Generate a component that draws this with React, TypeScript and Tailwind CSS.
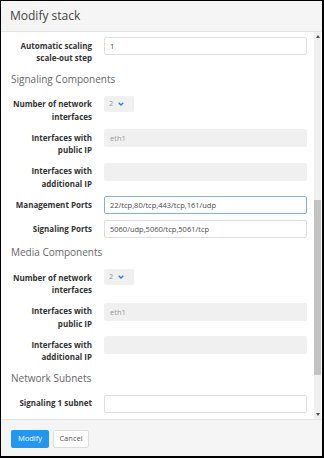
import { ReactNode } from 'react';

// Label column on the left, control on the right, like a horizontal bootstrap form
function Field({ lines, children }: { lines: string[]; children: ReactNode }) {
  return (
    <div className="flex items-start mb-[6px]">
      <div className="w-[81px] shrink-0 pt-[2.5px] text-right text-[8px] leading-[12.5px] font-bold text-[#333]">
        {lines.map((l, i) => (
          <div key={i}>{l}</div>
        ))}
      </div>
      <div className="ml-[12px] w-[203px] shrink-0">{children}</div>
    </div>
  );
}

function TextInput({ value = '', disabled = false, focused = false }: { value?: string; disabled?: boolean; focused?: boolean }) {
  let cls = 'border-[#dedede] bg-white text-[#4a4a4a]';
  if (disabled) cls = 'border-[#f0f0f0] bg-[#f0f0f0] text-[#999]';
  if (focused) cls = 'border-[#7fb0ee] bg-white text-[#4a4a4a]';
  return (
    <div className={`h-[18px] rounded-[2px] border px-[5px] text-[7.5px] leading-[16px] ${cls}`}>{value}</div>
  );
}

function SelectBox({ value }: { value: string }) {
  return (
    <div className="flex h-[16px] w-[30px] items-center gap-[5px] rounded-[2px] bg-[#f0f0f0] pl-[5px] text-[7.5px] text-[#999]">
      <span>{value}</span>
      <svg width="6" height="4" viewBox="0 0 6 4">
        <polyline points="0.7,0.7 3,3 5.3,0.7" fill="none" stroke="#2b7de0" strokeWidth="1.3" />
      </svg>
    </div>
  );
}

function Heading({ children }: { children: ReactNode }) {
  return <div className="h-[16px] mb-[9px] text-[10px] leading-[16px] text-[#666]">{children}</div>;
}

export default function App() {
  return (
    <div className="w-[324px] h-[458px] flex flex-col border-l border-t border-r-2 border-b-2 border-black bg-white font-['Open_Sans',sans-serif]">
      {/* Modal header */}
      <div className="h-[31px] shrink-0 border-b border-[#e3e3e3] bg-[#f5f5f5] pl-[9px] text-[12px] leading-[30px] text-[#444]">
        Modify stack
      </div>

      {/* Scrolled body */}
      <div className="flex h-[387px] shrink-0">
        <div className="flex-1 overflow-hidden pl-[10px] pt-[5px]">
          <Field lines={['Automatic scaling', 'scale-out step']}>
            <TextInput value="1" />
          </Field>

          <Heading>Signaling Components</Heading>
          <Field lines={['Number of network', 'interfaces']}>
            <SelectBox value="2" />
          </Field>
          <Field lines={['Interfaces with', 'public IP']}>
            <TextInput value="eth1" disabled />
          </Field>
          <Field lines={['Interfaces with', 'additional IP']}>
            <TextInput disabled />
          </Field>
          <Field lines={['Management Ports']}>
            <TextInput value="22/tcp,80/tcp,443/tcp,161/udp" focused />
          </Field>
          <Field lines={['Signaling Ports']}>
            <TextInput value="5060/udp,5060/tcp,5061/tcp" />
          </Field>

          <Heading>Media Components</Heading>
          <Field lines={['Number of network', 'interfaces']}>
            <SelectBox value="2" />
          </Field>
          <Field lines={['Interfaces with', 'public IP']}>
            <TextInput value="eth1" disabled />
          </Field>
          <Field lines={['Interfaces with', 'additional IP']}>
            <TextInput disabled />
          </Field>

          <Heading>Network Subnets</Heading>
          <Field lines={['Signaling 1 subnet']}>
            <TextInput />
          </Field>
          {/* next row is scrolled out of view, only the box top shows */}
          <Field lines={[]}>
            <TextInput />
          </Field>
        </div>

        {/* Scrollbar */}
        <div className="w-[7px] shrink-0 mr-[1px] flex flex-col items-center bg-[#f0f0f0]">
          <svg className="mt-[3px]" width="4" height="3" viewBox="0 0 4 3">
            <polygon points="0,3 2,0 4,3" fill="#505050" />
          </svg>
          <div className="mt-[162px] h-[175px] w-full bg-[#c2c2c2]" />
          <div className="flex-1" />
          <svg className="mb-[3px]" width="4" height="3" viewBox="0 0 4 3">
            <polygon points="0,0 4,0 2,3" fill="#505050" />
          </svg>
        </div>
      </div>

      {/* Modal footer */}
      <div className="flex-1 flex items-start gap-[4px] border-t border-[#e3e3e3] bg-[#f5f5f5] pl-[10px] pt-[10px]">
        <button className="h-[18px] w-[38px] rounded-[2px] bg-[#2196f3] text-[7.5px] text-white">Modify</button>
        <button className="h-[18px] w-[36px] rounded-[2px] border border-[#dcdcdc] bg-white text-[7.5px] text-[#555]">Cancel</button>
      </div>
    </div>
  );
}
